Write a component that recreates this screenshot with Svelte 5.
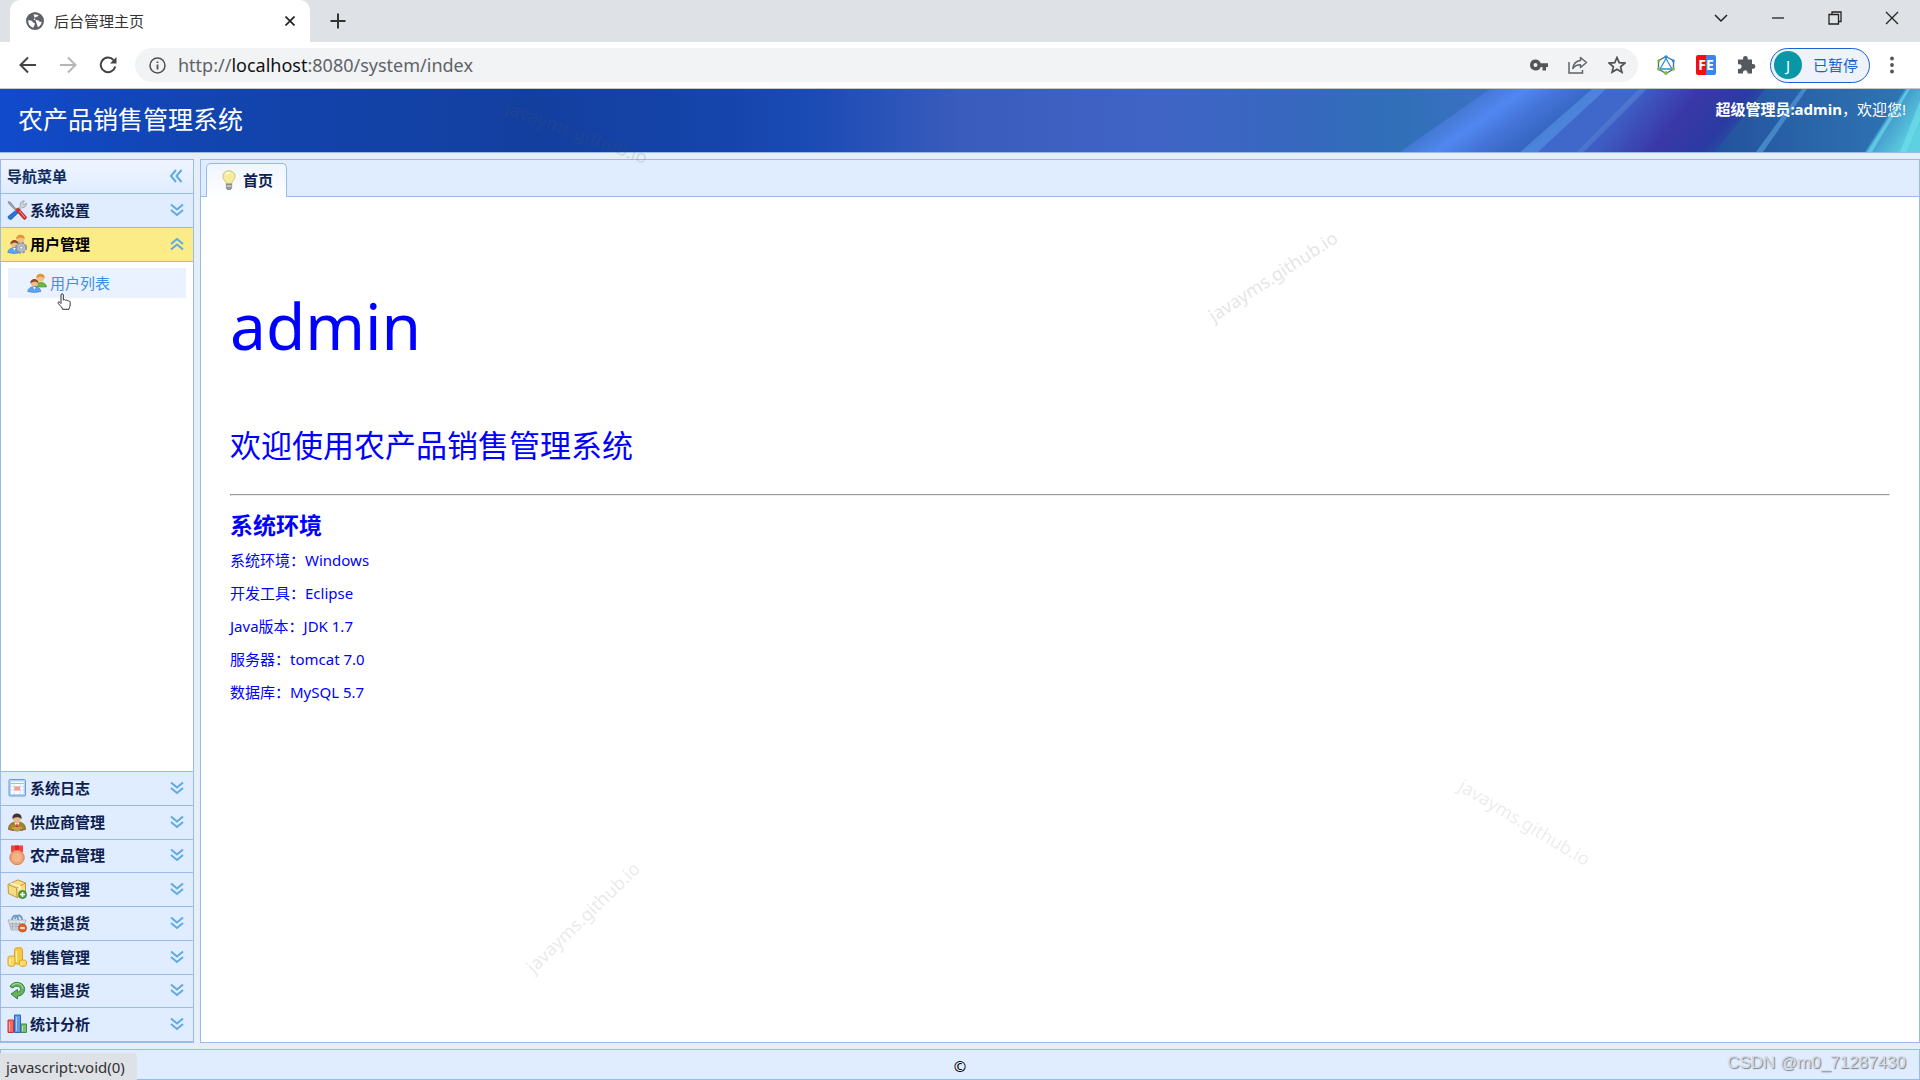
<script>
    let tab = "后台管理主页";
    let active = "users";

    const topGroups = [
        { id: "settings", label: "系统设置" },
        { id: "users", label: "用户管理" }
    ];

    const bottomGroups = [
        { id: "log", label: "系统日志" },
        { id: "supplier", label: "供应商管理" },
        { id: "product", label: "农产品管理" },
        { id: "purchase", label: "进货管理" },
        { id: "purchaseReturn", label: "进货退货" },
        { id: "sale", label: "销售管理" },
        { id: "saleReturn", label: "销售退货" },
        { id: "stats", label: "统计分析" }
    ];

    const environment = [
        "系统环境：Windows",
        "开发工具：Eclipse",
        "Java版本：JDK 1.7",
        "服务器：tomcat 7.0",
        "数据库：MySQL 5.7"
    ];
</script>

{#snippet people()}
    <circle cx="13.5" cy="5" r="3.8" fill="#f3c08a" />
    <path d="M9.2 5.500C8.500 -.8 18.500 -.8 17.800 5.500C16 3 11.500 3 9.200 5.500Z" fill="#e0962f" />
    <path d="M8.500 14C8.500 8.500 19 7.500 19.500 14Z" fill="#6ab845" stroke="#3c8f28" stroke-width=".6" />
    <circle cx="7.500" cy="10" r="3.600" fill="#f4b98a" />
    <path d="M3.400 10.500C2.800 4.500 12 4.500 11.500 10.500C9.500 8 6 8 3.400 10.500Z" fill="#8a4a24" />
    <path d="M.8 18.500C.8 12 13.800 12 13.800 18.500Q7 20.500 .8 18.500Z" fill="#5aa6f4" stroke="#2c78d0" stroke-width=".6" />
    <path d="M6 14L7.300 16.500L8.800 14Z" fill="#fff" />
{/snippet}

{#snippet groupIcon(id)}
    <svg class="icon" viewBox="0 0 20 20" aria-hidden="true">
        {#if id === "settings"}
            <path d="M1 1.500L3.300 2L9 9L8 10L2 4Z" fill="#9aa1a8" stroke="#6f767d" stroke-width=".5" />
            <path d="M10 9.500L13.500 6C12.500 3 14.500.500 17.500 1L15.500 3.300L17 5L19.300 3C19.800 6 17.500 8 15 7.300L11.500 11Z" fill="#d4d8dc" stroke="#868c92" stroke-width=".7" />
            <path d="M9 9L11.500 8L19.500 17C19.500 18.500 18.500 19.500 17 19.500L9.500 11Z" fill="#d9302c" stroke="#9f1c1c" stroke-width=".6" />
            <path d="M12.500 11L18 17.500" stroke="#f4a7a0" />
            <path d="M8.500 10.500L11 13L4.500 19.300C2.500 19.800.500 18.200 1 16.500Z" fill="#2d72d8" stroke="#174da3" stroke-width=".6" />
        {:else if id === "users"}
            {@render people()}
            <circle cx="14.200" cy="13.700" r="4.800" fill="none" stroke="#8d959c" stroke-width="2.400" stroke-dasharray="2.200 1.570" />
            <circle cx="14.200" cy="13.700" r="4.400" fill="#b9c0c6" stroke="#8d959c" stroke-width=".6" />
            <circle cx="14.200" cy="13.700" r="1.700" fill="#eef2f5" stroke="#7b848c" stroke-width=".7" />
        {:else if id === "log"}
            <rect x="2" y="1.500" width="16.500" height="16.500" rx="1" fill="#b9d3f4" stroke="#6d9bd6" />
            <rect x="4" y="3.500" width="12.500" height="12.500" fill="#fff" />
            <path d="M4 5.500H16.500" stroke="#9bca83" />
            <path d="M4 8.500H16.500M4 12H16.500M7.200 4V16M13.200 4V16" stroke="#bfd4ec" stroke-width=".7" />
            <rect x="7.500" y="8.500" width="5.500" height="4" fill="#f79a96" />
        {:else if id === "supplier"}
            <path d="M1.500 17.500C1.500 11 6 10 10 10S18.500 11 18.500 17.500Q10 20.500 1.500 17.500Z" fill="#a9822f" stroke="#70521a" stroke-width=".7" />
            <path d="M5 16H15M7 18H13" stroke="#ddc071" />
            <path d="M7.300 10.500L10 15L12.700 10.500Z" fill="#fff" />
            <path d="M9.500 11.500H10.500L11 15H9Z" fill="#c92d27" />
            <circle cx="10" cy="6.500" r="4" fill="#eab98d" />
            <path d="M5.500 7C4-.5 16-.5 14.500 7C12.500 4.500 8 4.500 5.500 7Z" fill="#3a3435" />
        {:else if id === "product"}
            <path d="M4 .5H16V7L10 9L4 7Z" fill="#f5403c" />
            <path d="M8 .5H12V6H8Z" fill="#dd2a2c" />
            <circle cx="10" cy="12.500" r="7.200" fill="#f2a676" stroke="#dd7d4c" />
            <circle cx="10" cy="12.500" r="5.200" fill="#f4b48a" stroke="#e6986a" stroke-width=".8" />
        {:else if id === "purchase"}
            <path d="M1 5.500L11 .8L18.500 4V13.500L10 18.500L1.500 14.500Z" fill="#f7dc82" stroke="#c29839" />
            <path d="M1 5.500L9.500 9L18.500 4M9.500 9L10 18.500" fill="none" stroke="#c79a3c" />
            <path d="M5 3.700L14 7V10L11.500 11V8L3 4.700" fill="#fff3c5" />
            <circle cx="15.500" cy="15.500" r="4" fill="#4fa33a" stroke="#2c7624" stroke-width=".7" />
            <path d="M15.500 13V18M13 15.500H18" stroke="#fff" stroke-width="1.500" />
        {:else if id === "purchaseReturn"}
            <path d="M5 8C5 1 12 1 11 7M8 6C9 .5 15.500 1.500 15 8" fill="none" stroke="#6f9cc7" stroke-width="1.800" />
            <path d="M1 7H19L17.500 11H2.500Z" fill="#dfe4e9" stroke="#9aa5b1" stroke-width=".7" />
            <path d="M2.500 11H17.500L16 17H4Z" fill="#d0d7de" stroke="#9aa5b1" stroke-width=".7" />
            <path d="M5.500 9V16M9 9V16M12.500 9V16M3 13.500H17" stroke="#a3adb8" stroke-width=".8" />
            <circle cx="15.500" cy="15" r="4" fill="#e9662a" stroke="#ad3d12" stroke-width=".7" />
            <path d="M13.300 15H17.700" stroke="#fff" stroke-width="1.600" />
        {:else if id === "sale"}
            <path d="M7.500 2.500C7.500 0 15.500 0 15.500 2.500V15C15.500 18 7.500 18 7.500 15Z" fill="#f6c93e" stroke="#dba02b" />
            <path d="M1 10.500C1 8.500 8 8.500 8 10.500V17.500C8 20 1 20 1 17.500Z" fill="#f9d861" stroke="#dba02b" />
            <path d="M12.500 14.500C12.500 12.500 19.500 12.500 19.500 14.500V17.500C19.500 20 12.500 20 12.500 17.500Z" fill="#f9d861" stroke="#dba02b" />
            <path d="M9.500 4V15M3 12V17.500M14.500 15.500V18" stroke="#fff0a8" stroke-width="1.500" />
        {:else if id === "saleReturn"}
            <path d="M3 6.500C6 0 18 1.500 17.500 9.500C17.200 14 14 16 10.500 16V19L4 14L10.500 9.500V12C14 12 14.500 7.500 11.500 6.500C9.500 5.800 7 6 6 8Z" fill="#67b35b" stroke="#37803a" />
            <path d="M5 5.500C9 2 15.500 3.500 16 8.500" fill="none" stroke="#b8e0a8" />
        {:else if id === "stats"}
            <path d="M1 6H6.500V18.500H1Z" fill="#f16a67" stroke="#c83431" />
            <path d="M14 10H19.500V18.500H14Z" fill="#7bbf75" stroke="#3f8d44" />
            <path d="M7.500 1H13.500V18.500H7.500Z" fill="#5d9bea" stroke="#2e65bd" />
            <path d="M2.500 8V17M9.500 3V17M15.500 12V17" stroke="#fff" stroke-opacity=".5" />
        {/if}
    </svg>
{/snippet}

{#snippet arrows(up)}
    <svg class="arrows" class:up viewBox="0 0 14 14" aria-hidden="true">
        <path d="M1 1.500L7 6.500L13 1.500M1 7L7 12L13 7" />
    </svg>
{/snippet}

{#snippet groupRow(group)}
    <button class="group" class:active={group.id === active} on:click={() => (active = group.id)}>
        {@render groupIcon(group.id)}
        <span class="group-label">{group.label}</span>
        {@render arrows(group.id === active)}
    </button>
{/snippet}

<div class="window">
    <div class="tab-strip">
        <div class="browser-tab">
            <svg class="globe" viewBox="0 0 18 18" aria-hidden="true">
                <circle cx="9" cy="9" r="8.800" fill="#5f6368" />
                <path d="M2 8.500C5 7.800 6.500 9 6.800 10.500C8.500 10.500 9.500 11.500 8.500 13C8 14 8 15 7 16C4 15.500 1.700 12.500 2 8.500ZM7.500 2.200L12.500 2.800C12.800 4.500 11 5 9.500 5C9.500 6.500 8 6.500 7.500 7.500C9 8.500 12 7.500 13 9C13.500 10.200 14.500 10 16 9.500C15.800 12 14 14.500 12 15.500" fill="#fff" />
                <circle cx="9" cy="9" r="7.800" fill="none" stroke="#5f6368" stroke-width="1.800" />
            </svg>
            <span class="browser-tab-title">{tab}</span>
            <button class="plain" aria-label="关闭标签页">
                <svg width="10" height="10" viewBox="0 0 10 10"><path d="M.5.5L9.500 9.500M9.500.5L.5 9.500" stroke="#222" stroke-width="1.700" /></svg>
            </button>
        </div>
        <button class="plain new-tab" aria-label="新标签页">
            <svg width="16" height="16" viewBox="0 0 16 16"><path d="M8 .5V15.500M.5 8H15.500" stroke="#333" stroke-width="2" /></svg>
        </button>
        <div class="window-controls">
            <button class="plain" aria-label="搜索标签页">
                <svg width="14" height="14" viewBox="0 0 14 14"><path d="M1 4L7 10L13 4" fill="none" stroke="#222" stroke-width="1.500" /></svg>
            </button>
            <button class="plain" aria-label="最小化">
                <svg width="14" height="14" viewBox="0 0 14 14"><path d="M1 7H13" stroke="#222" stroke-width="1.300" /></svg>
            </button>
            <button class="plain" aria-label="还原">
                <svg width="14" height="14" viewBox="0 0 14 14"><path d="M1 3.500H10.500V13H1ZM4 3.500V1H13V10.500H10.500" fill="none" stroke="#222" stroke-width="1.300" /></svg>
            </button>
            <button class="plain" aria-label="关闭">
                <svg width="14" height="14" viewBox="0 0 14 14"><path d="M1 1L13 13M13 1L1 13" stroke="#222" stroke-width="1.300" /></svg>
            </button>
        </div>
    </div>

    <div class="toolbar">
        <button class="plain nav" aria-label="后退">
            <svg width="18" height="18" viewBox="0 0 18 18"><path d="M17 9H2M9 1.500L1.500 9L9 16.500" fill="none" stroke="#444" stroke-width="2" /></svg>
        </button>
        <button class="plain nav" aria-label="前进">
            <svg width="18" height="18" viewBox="0 0 18 18"><path d="M1 9H16M9 1.500L16.500 9L9 16.500" fill="none" stroke="#b4b6b9" stroke-width="2" /></svg>
        </button>
        <button class="plain nav" aria-label="刷新">
            <svg width="18" height="18" viewBox="0 0 18 18"><path d="M14.500 4A7.300 7.300 0 1 0 16.200 10.500" fill="none" stroke="#444" stroke-width="2" /><path d="M17.500 1V7.500H11Z" fill="#444" /></svg>
        </button>
        <div class="address">
            <svg width="17" height="17" viewBox="0 0 17 17" aria-hidden="true"><circle cx="8.500" cy="8.500" r="7.500" fill="none" stroke="#4d5156" stroke-width="1.500" /><path d="M8.500 7.500V12.500M8.500 4.500V6" stroke="#4d5156" stroke-width="1.800" /></svg>
            <span class="url">http://<b>localhost</b>:8080/system/index</span>
            <div class="address-actions">
                <button class="plain" aria-label="密码">
                    <svg width="18" height="12" viewBox="0 0 18 12"><path d="M5.500 0.500A5.500 5.500 0 1 0 10.700 8H12.500V11.500H16V8H18V4.300H10.700A5.500 5.500 0 0 0 5.500.5ZM5.500 4A2 2 0 1 1 5.500 8A2 2 0 0 1 5.500 4Z" fill="#555" fill-rule="evenodd" /></svg>
                </button>
                <button class="plain" aria-label="分享">
                    <svg width="20" height="18" viewBox="0 0 20 18"><path d="M1 6V17H14.500V14" fill="none" stroke="#5f6368" stroke-width="1.500" /><path d="M12.500 1.500L18.500 6.500L12.500 11.500V8.700C9 8.700 6.500 10 4.800 12.500C5.300 8.500 7.500 5 12.500 4.500Z" fill="none" stroke="#5f6368" stroke-width="1.500" stroke-linejoin="round" /></svg>
                </button>
                <button class="plain" aria-label="收藏">
                    <svg width="18" height="18" viewBox="0 0 18 18"><path d="M9 1.500L11.200 6.600L16.800 7.100L12.600 10.800L13.900 16.200L9 13.300L4.100 16.200L5.400 10.800L1.200 7.100L6.800 6.600Z" fill="none" stroke="#4d5156" stroke-width="1.700" /></svg>
                </button>
            </div>
        </div>
        <div class="extensions">
            <button class="plain" aria-label="扩展一">
                <svg width="20" height="20" viewBox="0 0 20 20"><path d="M10 1.500L17.500 5.700V14L10 18.500L2.500 14V5.700Z" fill="none" stroke="#5b6f7c" stroke-width="1.400" /><path d="M10 3.500L16 14H4Z" fill="#fff" stroke="#2492d6" stroke-width="1.300" /><circle cx="10" cy="2" r="1.700" fill="#2492d6" /><circle cx="2.800" cy="5.800" r="1.500" fill="#7bc143" /><circle cx="17.200" cy="5.800" r="1.500" fill="#2492d6" /><circle cx="2.800" cy="14" r="1.700" fill="#7bc143" /><circle cx="17.200" cy="14" r="1.700" fill="#7bc143" /><circle cx="10" cy="18" r="1.900" fill="#7bc143" /></svg>
            </button>
            <button class="plain fe" aria-label="FE 助手"><span>F</span><span>E</span></button>
            <button class="plain" aria-label="扩展程序">
                <svg width="20" height="20" viewBox="0 0 20 20"><path d="M2 4.500H7V3.500A2.400 2.400 0 0 1 11.800 3.500V4.500H16V9H17A2.400 2.400 0 0 1 17 13.800H16V18.500H11.500V17A2.300 2.300 0 0 0 7 17V18.500H2V14H3.300A2.400 2.400 0 0 0 3.300 9.200H2Z" fill="#55595e" /></svg>
            </button>
            <button class="profile"><span class="avatar">J</span>已暂停</button>
            <button class="plain" aria-label="菜单">
                <svg width="4" height="18" viewBox="0 0 4 18"><circle cx="2" cy="2.500" r="1.900" fill="#555" /><circle cx="2" cy="9" r="1.900" fill="#555" /><circle cx="2" cy="15.500" r="1.900" fill="#555" /></svg>
            </button>
        </div>
    </div>

    <header class="banner">
        <svg class="rays" viewBox="0 0 560 64" preserveAspectRatio="none" aria-hidden="true">
            <defs>
                <linearGradient id="ray" gradientUnits="userSpaceOnUse" x1="130" y1="0" x2="170" y2="56">
                    <stop offset="0" stop-color="#4f80e4" stop-opacity=".6" />
                    <stop offset=".3" stop-color="#5088f0" />
                    <stop offset=".6" stop-color="#4474d8" />
                    <stop offset="1" stop-color="#3565bf" />
                </linearGradient>
                <linearGradient id="violet" gradientUnits="userSpaceOnUse" x1="285" y1="0" x2="372" y2="68">
                    <stop offset="0" stop-color="#3e5cc2" />
                    <stop offset=".4" stop-color="#3a38a8" />
                    <stop offset=".75" stop-color="#2b3aa2" />
                    <stop offset="1" stop-color="#255a9f" />
                </linearGradient>
                <linearGradient id="deep" x1="0" x2="1">
                    <stop offset="0" stop-color="#24529e" />
                    <stop offset=".5" stop-color="#2a66aa" />
                    <stop offset="1" stop-color="#2f78b6" />
                </linearGradient>
                <linearGradient id="cyan" gradientUnits="userSpaceOnUse" x1="530" y1="20" x2="560" y2="40">
                    <stop offset="0" stop-color="#3f92ca" />
                    <stop offset="1" stop-color="#5fd0e0" />
                </linearGradient>
            </defs>
            <path d="M130 0H240L165 64H40Z" fill="url(#ray)" />
            <path d="M240 0H285L220 64H165Z" fill="#3f68ca" />
            <path d="M285 0H420L370 64H220Z" fill="url(#violet)" />
            <path d="M405 0H560V64H355Z" fill="url(#deep)" />
            <path d="M232 0H246L178 64H160Z" fill="#5696e6" opacity=".6" />
            <path d="M279 0H287L224 64H217Z" fill="#648ce2" opacity=".4" />
            <path d="M442 0H447L403 64H396Z" fill="#4b92d0" opacity=".8" />
            <path d="M545 0H560V64H505Z" fill="url(#cyan)" />
            <path d="M547 0H550L512 64H507ZM560 12V32L546 64H540Z" fill="#70e2ec" opacity=".6" />
        </svg>
        <h1>农产品销售管理系统</h1>
        <p class="greeting"><strong>超级管理员:admin</strong>，欢迎您!</p>
    </header>

    <div class="body">
        <nav class="sidebar">
            <div class="sidebar-title">
                <span>导航菜单</span>
                <button class="plain" aria-label="收起">
                    <svg class="arrows left" viewBox="0 0 14 14"><path d="M1 1.500L7 6.500L13 1.500M1 7L7 12L13 7" /></svg>
                </button>
            </div>
            {#each topGroups as group (group.id)}
                {@render groupRow(group)}
            {/each}
            <div class="submenu">
                <a href="#users">
                    <svg class="icon" viewBox="0 0 20 20" aria-hidden="true">{@render people()}</svg>
                    用户列表
                </a>
                <svg class="pointer" viewBox="0 0 14 17" aria-hidden="true">
                    <path d="M4 9.500V2C4 .3 6.300.3 6.300 2V7C7.300 6.300 8.300 6.600 8.600 7.400C9.500 6.900 10.600 7.200 10.900 8C12 7.600 13.200 8.200 13.200 9.500V12C13.200 14 12 14.500 12 16.300H5.500C5.500 14.500 3.500 13.300 1.200 10.400C.3 9 2 8 4 10.500Z" fill="#fff" stroke="#333" />
                </svg>
            </div>
            <div class="bottom-groups">
                {#each bottomGroups as group (group.id)}
                    {@render groupRow(group)}
                {/each}
            </div>
        </nav>

        <main class="center">
            <div class="tabs">
                <button class="tab">
                    <svg class="bulb" viewBox="0 0 14 20" aria-hidden="true">
                        <path d="M7 .8C1.500.8-.5 6 2 9.500C3.300 11.300 4.300 12.500 4.300 14H9.700C9.700 12.500 10.700 11.300 12 9.500C14.500 6 12.500.8 7 .8Z" fill="#f4ec98" stroke="#cfc27a" />
                        <path d="M4 4.500C5 3 6 2.500 7.500 2.500" fill="none" stroke="#fff" stroke-width="1.500" />
                        <path d="M4.300 14H9.700V18L8.500 19.500H5.500L4.300 18Z" fill="#9a9a9a" stroke="#666" stroke-width=".6" />
                        <path d="M4.300 16H9.700" stroke="#e2e2e2" />
                    </svg>
                    首页
                </button>
            </div>
            <section class="welcome">
                <p class="name">admin</p>
                <p class="hello">欢迎使用农产品销售管理系统</p>
                <hr />
                <h2>系统环境</h2>
                {#each environment as line}
                    <p class="env">{line}</p>
                {/each}
            </section>
        </main>
    </div>

    <footer>©</footer>

    <div class="status">javascript:void(0)</div>
    <div class="credit">CSDN @m0_71287430</div>
    <span class="mark mark-banner">javayms.github.io</span>
    <span class="mark mark-top">javayms.github.io</span>
    <span class="mark mark-right">javayms.github.io</span>
    <span class="mark mark-bottom">javayms.github.io</span>
</div>

<style>
:global(body) {
    margin: 0;
    background: #e6eef8;
}

.window {
    position: relative;
    display: flex;
    flex-direction: column;
    height: 100vh;
    overflow: hidden;
    font-family: "Noto Sans", "Noto Sans CJK SC", sans-serif;
    font-size: 15px;
    line-height: 20px;
    color: #000;
}

button {
    font: inherit;
    cursor: pointer;
}

.plain {
    display: flex;
    align-items: center;
    justify-content: center;
    padding: 0;
    border: 0;
    background: none;
}

svg {
    display: block;
    flex: none;
}

/* Browser */
.tab-strip {
    display: flex;
    flex: none;
    height: 42px;
    background: #dee1e6;
}

.browser-tab {
    display: flex;
    align-items: center;
    box-sizing: border-box;
    width: 300px;
    margin-left: 10px;
    padding: 0 15px 0 16px;
    border-radius: 10px 10px 0 0;
    background: #fff;
}

.globe {
    width: 18px;
    height: 18px;
}

.browser-tab-title {
    flex: 1;
    margin-left: 10px;
    color: #333;
}

.new-tab {
    margin-left: 20px;
}

.window-controls {
    display: flex;
    margin-left: auto;
    height: 36px;
}

.window-controls button {
    width: 57px;
}

.toolbar {
    display: flex;
    align-items: center;
    flex: none;
    box-sizing: border-box;
    height: 47px;
    padding: 0 26px 0 8px;
    border-bottom: 1px solid #c9c9c9;
    background: #fff;
}

.nav {
    width: 40px;
}

.address {
    display: flex;
    align-items: center;
    flex: 1;
    height: 34px;
    margin-left: 7px;
    padding: 0 12px 0 14px;
    border-radius: 17px;
    background: #f1f3f4;
}

.url {
    flex: 1;
    margin-left: 12px;
    font-size: 18px;
    color: #5f6368;
}

.url b {
    font-weight: 400;
    color: #111;
}

.address-actions {
    display: flex;
    gap: 20px;
}

.extensions {
    display: flex;
    align-items: center;
    gap: 20px;
    margin-left: 18px;
}

.fe {
    width: 20px;
    height: 20px;
    border-radius: 2px;
    background: linear-gradient(90deg, #ee1111 50%, #3c84ee 50%);
    color: #fff;
    font-size: 14px;
    font-weight: 700;
}

.profile {
    display: flex;
    align-items: center;
    gap: 11px;
    box-sizing: border-box;
    height: 35px;
    padding: 0 11px 0 3px;
    border: 1px solid #1a62d0;
    border-radius: 18px;
    background: #edf2fb;
    color: #1a62d0;
    margin-left: -6px;
}

.avatar {
    width: 28px;
    border-radius: 14px;
    background: #0797a7;
    color: #fff;
    line-height: 28px;
}

/* Banner */
.banner {
    position: relative;
    display: flex;
    justify-content: space-between;
    flex: none;
    box-sizing: border-box;
    height: 64px;
    padding: 0 14px 0 18px;
    border-bottom: 1px solid #99bbe8;
    background: linear-gradient(90deg, #114acc 0%, #1245b0 10%, #133f9f 28%, #1545ac 38%, #1a4ab4 42%, #3a5cbc 50%, #4064c6 60%, #3668be 68%, #3070b8 73%, #3a70c4 77%);
    color: #fff;
}

.rays {
    position: absolute;
    top: 0;
    right: 0;
    width: 560px;
    height: 100%;
}

h1 {
    position: relative;
    margin: 0;
    font-size: 25px;
    font-weight: 400;
    line-height: 60px;
}

.greeting {
    position: relative;
    margin: 10px 0 0;
}

/* Layout */
.body {
    display: flex;
    gap: 6px;
    flex: 1;
    min-height: 0;
    padding: 6px 0;
    background: #e6eef8;
}

.sidebar {
    display: flex;
    flex-direction: column;
    box-sizing: border-box;
    width: 194px;
    border: 1px solid #99bbe8;
    background: #fff;
}

.sidebar-title {
    display: flex;
    align-items: center;
    justify-content: space-between;
    box-sizing: border-box;
    height: 34px;
    padding: 0 10px 1px 6px;
    border-bottom: 1px solid #99bbe8;
    background: linear-gradient(#eff5ff, #e0ecff);
    color: #0e2d5f;
    font-weight: 700;
}

.group {
    display: flex;
    align-items: center;
    gap: 2px;
    box-sizing: border-box;
    width: 100%;
    height: 34px;
    padding: 0 9px 1px 6px;
    border: 0;
    border-bottom: 1px solid #99bbe8;
    background: #e0ecff;
    color: #0e1f4f;
    font-weight: 700;
    text-align: left;
}

.group.active {
    background: #fbec88;
    color: #000;
}

.group-label {
    flex: 1;
    margin-left: 1px;
}

.icon {
    width: 20px;
    height: 20px;
}

.arrows {
    width: 14px;
    height: 14px;
    fill: none;
    stroke: #5fa9e4;
    stroke-width: 2;
}

.arrows.up {
    transform: rotate(180deg);
}

.arrows.left {
    transform: rotate(90deg);
}

.submenu {
    position: relative;
    flex: 1;
    padding: 6px 7px;
}

.submenu a {
    display: flex;
    align-items: center;
    gap: 3px;
    height: 30px;
    padding-left: 19px;
    background: #eaf2ff;
    color: #3d8ee8;
    text-decoration: none;
}

.pointer {
    position: absolute;
    top: 31px;
    left: 56px;
    width: 14px;
    height: 17px;
}

.bottom-groups {
    display: grid;
    grid-auto-rows: 1fr;
    height: 270px;
    border-top: 1px solid #99bbe8;
}

.bottom-groups .group {
    height: auto;
}

.center {
    display: flex;
    flex-direction: column;
    flex: 1;
    border: 1px solid #99bbe8;
    background: #fff;
}

.tabs {
    display: flex;
    align-items: flex-end;
    box-sizing: border-box;
    height: 37px;
    padding-left: 5px;
    border-bottom: 1px solid #99bbe8;
    background: #e0ecff;
}

.tab {
    display: flex;
    align-items: center;
    gap: 7px;
    box-sizing: border-box;
    height: 34px;
    margin-bottom: -1px;
    padding: 0 13px 2px 15px;
    border: 1px solid #99bbe8;
    border-bottom: 0;
    border-radius: 5px 5px 0 0;
    background: linear-gradient(#eff5ff, #fff);
    color: #0e1f4f;
    font-weight: 700;
}

.bulb {
    width: 14px;
    height: 20px;
}

.welcome {
    padding: 81px 29px 0;
    color: #0000ff;
}

.welcome p,
.welcome h2 {
    margin: 0;
}

.welcome .name {
    font-size: 64px;
    line-height: 96px;
}

.welcome .hello {
    margin-top: 48px;
    font-size: 31px;
    line-height: 46px;
}

hr {
    margin: 26px 0 14px;
    border: 1px solid;
    border-color: #9a9a9a #eee #eee #9a9a9a;
}

h2 {
    font-size: 23px;
    line-height: 30px;
}

.welcome h2 {
    margin-bottom: 4px;
}

.env {
    line-height: 33px;
}

footer {
    flex: none;
    box-sizing: border-box;
    height: 31px;
    border: 1px solid #99bbe8;
    background: #e0ecff;
    line-height: 32px;
    text-align: center;
}

/* Overlays */
.status {
    position: absolute;
    left: 0;
    bottom: 0;
    padding: 4px 12px 3px 6px;
    border-radius: 0 4px 0 0;
    background: #dee1e6;
    color: #333;
}

.credit {
    position: absolute;
    right: 14px;
    bottom: 7px;
    color: #d4dae2;
    font-family: "Liberation Sans", Arial, sans-serif;
    font-size: 17px;
    text-shadow: 1px 1px 1px #7a7f86;
}

.mark {
    position: absolute;
    font-size: 18px;
    line-height: 24px;
    color: rgba(90, 90, 90, 0.18);
    pointer-events: none;
}

.mark-banner {
    left: 502px;
    top: 120px;
    transform: rotate(20deg);
}

.mark-top {
    left: 1198px;
    top: 264px;
    transform: rotate(-33deg);
}

.mark-right {
    left: 1450px;
    top: 810px;
    transform: rotate(31deg);
    color: rgba(90, 90, 90, 0.12);
}

.mark-bottom {
    left: 508px;
    top: 905px;
    transform: rotate(-44deg);
    color: rgba(90, 90, 90, 0.15);
}
</style>
